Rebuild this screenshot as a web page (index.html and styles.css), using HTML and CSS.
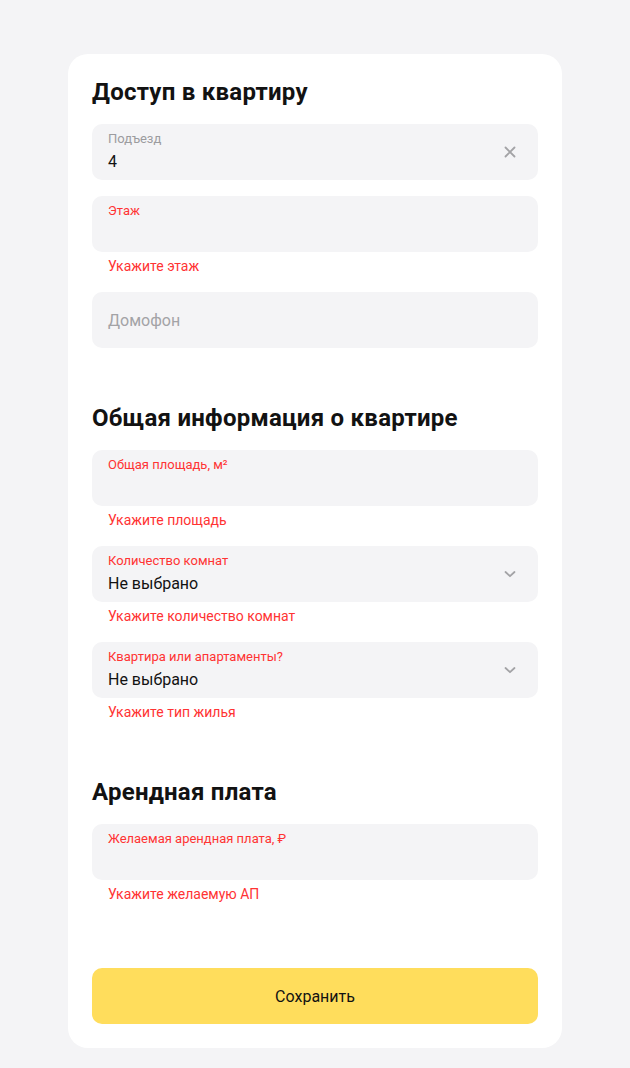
FILE: index.html
```html
<!DOCTYPE html>
<html lang="ru">
<head>
<meta charset="utf-8">
<link rel="stylesheet" href="styles.css">
</head>
<body>
<div class="page">
  <form class="card">
    <h2 class="title">Доступ в квартиру</h2>
    <div class="field">
      <div class="box">
        <div class="content">
          <div class="label">Подъезд</div>
          <div class="value">4</div>
        </div>
        <svg class="icon" width="16" height="16" viewBox="0 0 16 16"><path d="M3.5 3.5 L12.5 12.5 M12.5 3.5 L3.5 12.5" stroke="#a3a3a6" stroke-width="1.8" stroke-linecap="round" fill="none"/></svg>
      </div>
    </div>
    <div class="field">
      <div class="box">
        <div class="content">
          <div class="label error">Этаж</div>
          <div class="value"></div>
        </div>
      </div>
      <div class="hint">Укажите этаж</div>
    </div>
    <div class="field">
      <div class="box">
        <div class="placeholder">Домофон</div>
      </div>
    </div>

    <h2 class="title section">Общая информация о квартире</h2>
    <div class="field">
      <div class="box">
        <div class="content">
          <div class="label error">Общая площадь, м²</div>
          <div class="value"></div>
        </div>
      </div>
      <div class="hint">Укажите площадь</div>
    </div>
    <div class="field">
      <div class="box">
        <div class="content">
          <div class="label error">Количество комнат</div>
          <div class="value">Не выбрано</div>
        </div>
        <svg class="icon" width="16" height="16" viewBox="0 0 16 16"><path d="M3.5 6 L8 10.2 L12.5 6" stroke="#a3a3a6" stroke-width="1.8" stroke-linecap="round" stroke-linejoin="round" fill="none"/></svg>
      </div>
      <div class="hint">Укажите количество комнат</div>
    </div>
    <div class="field">
      <div class="box">
        <div class="content">
          <div class="label error">Квартира или апартаменты?</div>
          <div class="value">Не выбрано</div>
        </div>
        <svg class="icon" width="16" height="16" viewBox="0 0 16 16"><path d="M3.5 6 L8 10.2 L12.5 6" stroke="#a3a3a6" stroke-width="1.8" stroke-linecap="round" stroke-linejoin="round" fill="none"/></svg>
      </div>
      <div class="hint">Укажите тип жилья</div>
    </div>

    <h2 class="title section">Арендная плата</h2>
    <div class="field">
      <div class="box">
        <div class="content">
          <div class="label error">Желаемая арендная плата, ₽</div>
          <div class="value"></div>
        </div>
      </div>
      <div class="hint">Укажите желаемую АП</div>
    </div>

    <button type="button" class="save">Сохранить</button>
  </form>
</div>
</body>
</html>
```

FILE: styles.css
```css
* { box-sizing: border-box; }
html, body { margin: 0; padding: 0; }
body {
  background: #f4f4f6;
  font-family: Roboto, "Noto Sans", Arial, sans-serif;
  color: #121212;
}
.page {
  display: flex;
  justify-content: center;
  padding: 54px 0 20px;
}
.card {
  width: 494px;
  background: #fff;
  border-radius: 20px;
  padding: 24px 24px 24px;
  display: flex;
  flex-direction: column;
}
.title {
  margin: 0 0 18px;
  font-size: 24px;
  line-height: 28px;
  font-weight: 700;
  letter-spacing: 0.25px;
  color: #121212;
}
.title.section { margin-top: 56px; }
.field { margin-bottom: 16px; }
.field:has(+ .title), .field:has(+ .save) { margin-bottom: 0; }
.box {
  height: 56px;
  background: #f4f4f6;
  border-radius: 10px;
  display: flex;
  align-items: center;
  padding: 0 20px 0 16px;
}
.content {
  flex: 1;
  display: flex;
  flex-direction: column;
  align-self: stretch;
  padding-top: 7px;
}
.label {
  font-size: 13px;
  line-height: 16px;
  color: #9c9c9f;
}
.label.error { color: #ff3333; }
.value {
  margin-top: 5px;
  font-size: 16px;
  line-height: 20px;
  color: #121212;
}
.placeholder {
  font-size: 16px;
  color: #a3a3a6;
}
.icon { flex: none; }
.hint {
  margin-top: 4px;
  padding-left: 16px;
  font-size: 14px;
  line-height: 20px;
  color: #ff3333;
}
.save {
  margin-top: 64px;
  height: 56px;
  border: 0;
  border-radius: 10px;
  background: #ffdd5c;
  font-family: inherit;
  font-size: 16px;
  color: #121212;
  cursor: pointer;
}
```
